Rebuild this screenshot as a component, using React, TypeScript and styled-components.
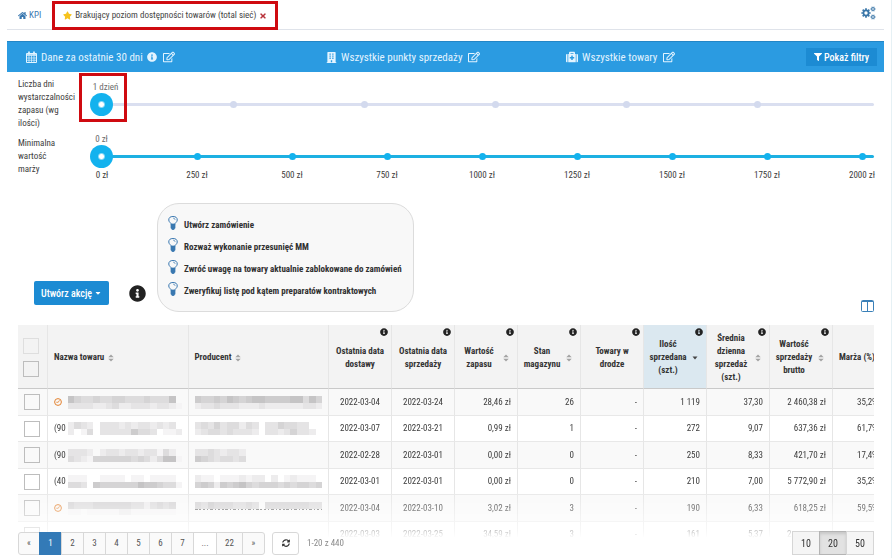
import React, { useState } from "react";
import styled, { createGlobalStyle, css } from "styled-components";
import {
  FaBuilding,
  FaFilter,
  FaHome,
  FaInfoCircle,
  FaMedkit,
  FaRegEdit,
  FaStar,
  FaSyncAlt,
  FaTimes,
  FaCaretDown,
} from "react-icons/fa";

const GlobalStyle = createGlobalStyle`
  *, *::before, *::after { box-sizing: border-box; }
  body {
    margin: 0;
    background: #fff;
    color: #3c3c3c;
    font-family: "Roboto Condensed", Roboto, "Liberation Sans", sans-serif;
    font-size: 9px;
    line-height: 13px;
  }
  button, input { font: inherit; color: inherit; }
  svg { display: block; flex: none; }
`;

const Page = styled.div`
  min-height: 100vh;
  padding: 0 7px;
  border-right: 1px solid #e6f1f5;
  overflow: hidden;
`;

const Tabs = styled.nav`
  display: flex;
  align-items: stretch;
  height: 30px;
  border-bottom: 1px solid #dfe3ea;
`;

const Tab = styled.a<{ $active?: boolean }>`
  position: relative;
  display: flex;
  align-items: center;
  gap: ${(p) => (p.$active ? "3px" : "2px")};
  padding: 2px 11px 0 11px;
  color: ${(p) => (p.$active ? "#444" : "#3a78b0")};
  text-decoration: none;
  white-space: nowrap;
`;

const CloseButton = styled.button`
  display: flex;
  padding: 0;
  border: 0;
  background: none;
  color: #b8323a;
  cursor: pointer;
`;

const SettingsButton = styled.button`
  display: flex;
  align-items: center;
  margin-left: auto;
  padding: 0 8px 4px;
  border: 0;
  background: none;
  color: #3a76a8;
  cursor: pointer;
`;

const Highlight = styled.span<{ $around: "tab" | "thumb" }>`
  position: absolute;
  border: 3px solid #cf0a10;
  pointer-events: none;
  ${(p) =>
    p.$around === "tab"
      ? css`
          inset: 1px 0 -1px 0;
        `
      : css`
          left: -11px;
          top: -5px;
          width: 48px;
          height: 49px;
        `}
`;

const FilterBar = styled.div`
  display: grid;
  grid-template-columns: 5fr 4fr 4fr auto;
  align-items: center;
  height: 31px;
  margin-top: 11px;
  padding: 0 7px 0 19px;
  background: #2b9be1;
  border-top: 1px solid #2386c6;
  color: #e3f4ff;
  font-size: 11px;
`;

const FilterItem = styled.div`
  display: flex;
  align-items: center;
  gap: 4px;
  white-space: nowrap;
`;

const FilterEdit = styled.button`
  display: flex;
  padding: 0 0 0 2px;
  border: 0;
  background: none;
  cursor: pointer;
`;

const ShowFilters = styled.button`
  display: flex;
  align-items: center;
  gap: 2px;
  height: 18px;
  padding: 0 8px;
  border: 0;
  background: #1c8bd3;
  color: #fff;
  font-size: 10px;
  font-weight: 500;
  cursor: pointer;
`;

const Content = styled.main`
  padding: 0 10px 0 11px;
`;

const Sliders = styled.section`
  display: grid;
  row-gap: 2px;
  padding-top: 6px;
`;

const SliderRow = styled.div<{ $lower?: boolean }>`
  display: grid;
  grid-template-columns: 72px 1fr;
  & > label {
    padding-top: ${(p) => (p.$lower ? "5px" : "0")};
    padding-right: 12px;
  }
`;

const SliderBody = styled.div<{ $lower?: boolean }>`
  position: relative;
  padding-top: ${(p) => (p.$lower ? "0" : "2px")};
`;

const SliderValue = styled.output<{ $wide?: boolean }>`
  display: flex;
  justify-content: center;
  width: ${(p) => (p.$wide ? "31px" : "23px")};
  height: 13px;
  padding-top: 1px;
  color: #6b6b6b;
  white-space: nowrap;
`;

const Track = styled.div<{ $color: string }>`
  position: relative;
  height: 23px;
  &::before {
    content: "";
    position: absolute;
    inset: 10px 0 10px 12px;
    border-radius: 2px;
    background: ${(p) => p.$color};
  }
`;

const Marks = styled.div<{ $overlay?: boolean; $end: string }>`
  display: flex;
  justify-content: space-between;
  align-items: center;
  margin: 0 ${(p) => p.$end} 0 12px;
  height: 15px;
  ${(p) =>
    p.$overlay &&
    css`
      position: absolute;
      inset: 0;
      height: auto;
    `}
`;

const Mark = styled.span`
  display: flex;
  justify-content: center;
  width: 0;
  white-space: nowrap;
`;

const Dot = styled.i<{ $color: string }>`
  flex: none;
  width: 7px;
  height: 7px;
  border-radius: 50%;
  background: ${(p) => p.$color};
`;

const Range = styled.input`
  appearance: none;
  position: relative;
  display: block;
  width: 100%;
  height: 23px;
  margin: 0;
  background: transparent;
  cursor: pointer;
  &::-webkit-slider-thumb {
    appearance: none;
    width: 23px;
    height: 23px;
    border-radius: 50%;
    background: radial-gradient(circle, #fff 0 2px, #13b2ee 4px);
  }
`;

const Actions = styled.section`
  display: flex;
  align-items: flex-end;
  margin-top: 20px;
  padding-left: 16px;
`;

const CreateAction = styled.button`
  display: flex;
  align-items: center;
  justify-content: center;
  gap: 2px;
  width: 75px;
  height: 24px;
  margin-bottom: 7px;
  padding: 0;
  border: 0;
  border-radius: 2px;
  background: #1c8bd3;
  color: #fff;
  font-size: 10px;
  font-weight: 500;
  white-space: nowrap;
  cursor: pointer;
`;

const HelpIcon = styled.span`
  margin: 0 11px 10px 20px;
  color: #222;
`;

const Hints = styled.ul`
  margin: 0;
  padding: 10px 11px 9px 10px;
  border: 1px solid #dcdcdc;
  border-radius: 22px;
  background: #f8f8f8;
  list-style: none;
`;

const Hint = styled.li`
  display: flex;
  align-items: center;
  gap: 6px;
  height: 22px;
  color: #303030;
  font-weight: 700;
  & svg {
    margin-bottom: 4px;
  }
`;

const ColumnsButton = styled.button`
  display: flex;
  margin-left: auto;
  padding: 0;
  border: 0;
  background: none;
  color: #3a80b8;
  cursor: pointer;
`;

const TableArea = styled.div`
  max-height: 213px;
  margin-top: 13px;
  overflow: hidden;
  mask-image: linear-gradient(#000 0 163px, rgba(0, 0, 0, 0.3) 206px, transparent);
`;

const Table = styled.table`
  width: calc(100% + 12px);
  table-layout: fixed;
  border-collapse: separate;
  border-spacing: 0;
`;

const Col = styled.col<{ $w?: number }>`
  width: ${(p) => (p.$w ? `${p.$w}px` : "auto")};
`;

const HeadCell = styled.th<{ $sorted?: boolean }>`
  position: relative;
  height: 64px;
  padding: 0;
  background: ${(p) => (p.$sorted ? "#dbe8f0" : "#f3f3f3")};
  border-bottom: 1px solid #c9c9c9;
  border-right: 1px solid #e6e6e6;
  color: #333;
  font-weight: 700;
  vertical-align: middle;
`;

const HeadInner = styled.div<{ $left?: boolean; $sortable?: boolean }>`
  display: flex;
  align-items: center;
  justify-content: ${(p) => (p.$left ? "flex-start" : "center")};
  gap: 4px;
  padding-top: 2px;
  padding-right: ${(p) => (p.$sortable && !p.$left ? "8px" : "0")};
  padding-left: ${(p) => (p.$left ? "6px" : "0")};
  white-space: nowrap;
  & > span {
    flex: ${(p) => (p.$left ? "none" : "1")};
  }
  & > svg {
    margin-left: ${(p) => (p.$left ? "0" : "-4px")};
  }
`;

const Line = styled.span`
  display: block;
`;

const HeadInfo = styled.span`
  position: absolute;
  top: 3px;
  right: 3px;
  color: #222;
`;

const BodyRow = styled.tr`
  height: 26px;
  background: #fff;
  &:nth-child(odd) {
    height: 27px;
    background: #f9f9f9;
  }
`;

const Cell = styled.td<{ $align?: "left" | "center" | "right"; $indent?: number }>`
  padding: 0 6px 0 ${(p) => p.$indent ?? 6}px;
  border-right: 1px solid #e6e6e6;
  border-bottom: 1px solid #e8e8e8;
  text-align: ${(p) => p.$align ?? "left"};
  white-space: nowrap;
`;

const NameCell = styled.div`
  display: flex;
  align-items: center;
  gap: 1px;
`;

const NameStart = styled.span`
  flex: none;
  width: 13px;
`;

const Check = styled.input<{ $faint?: boolean }>`
  appearance: none;
  display: block;
  width: 16px;
  height: 16px;
  margin: 0 auto;
  border: 1px solid ${(p) => (p.$faint ? "#dedede" : "#bdbdbd")};
  background: transparent;
  & + & {
    margin-top: 7px;
  }
  &:checked {
    background: #2b9be1;
  }
`;

const CheckPair = styled.div`
  padding: 2px 4px 0 0;
`;

const Footer = styled.footer`
  position: relative;
  display: flex;
  align-items: center;
  margin-top: -7px;
`;

const ButtonGroup = styled.div`
  display: flex;
  background: #fff;
  & > button {
    margin-left: -1px;
  }
  & > button:first-child {
    margin-left: 0;
    border-radius: 3px 0 0 3px;
  }
  & > button:last-child {
    border-radius: 0 3px 3px 0;
  }
`;

const PageButton = styled.button<{ $w?: number; $current?: boolean; $flat?: boolean }>`
  width: ${(p) => p.$w ?? 23}px;
  height: 23px;
  padding: 0;
  border: 1px solid ${(p) => (p.$current ? "#337ab7" : "#d8d8d8")};
  background: ${(p) => (p.$current ? "#337ab7" : p.$flat ? "#fff" : "#fafafa")};
  color: ${(p) => (p.$current ? "#fff" : "#555")};
  cursor: pointer;
`;

const RefreshButton = styled.button`
  display: flex;
  align-items: center;
  justify-content: center;
  width: 27px;
  height: 23px;
  margin: 0 8px 0 7px;
  border: 1px solid #d8d8d8;
  border-radius: 3px;
  background: #fff;
  color: #333;
  cursor: pointer;
`;

const RangeText = styled.span`
  color: #8a8a8a;
`;

const SizeGroup = styled.div`
  display: flex;
  margin-left: auto;
`;

const SizeButton = styled.button<{ $on?: boolean }>`
  width: 28px;
  height: 24px;
  margin-left: -1px;
  padding: 0;
  border: 1px solid ${(p) => (p.$on ? "#b4b4b4" : "#d6d6d6")};
  background: ${(p) => (p.$on ? "#e2e2e2" : "#f5f5f5")};
  box-shadow: ${(p) => (p.$on ? "inset 0 2px 3px rgba(0,0,0,.12)" : "none")};
  color: #333;
  font-size: 10px;
  cursor: pointer;
`;

const CalendarIcon = () => (
  <svg width="11" height="12" viewBox="0 0 22 24" fill="none" stroke="currentColor" aria-hidden>
    <path d="M1 5h20v18H1z" strokeWidth="2" />
    <path d="M1 8h20" strokeWidth="3" />
    <path d="M1 14h20M1 18.5h20M6 9v14M11 9v14M16 9v14" strokeWidth="1.4" />
    <path d="M6 1v6M16 1v6" strokeWidth="3.4" />
  </svg>
);

const gear = (cx: number, cy: number, r: number, teeth: number) =>
  Array.from({ length: teeth }, (_, i) => {
    const a = (i * 2 * Math.PI) / teeth;
    return `M${cx + Math.cos(a) * r} ${cy + Math.sin(a) * r}L${cx + Math.cos(a) * r * 1.5} ${cy + Math.sin(a) * r * 1.5}`;
  }).join("");

const GearsIcon = () => (
  <svg width="15" height="14" viewBox="0 0 30 28" fill="none" stroke="currentColor" aria-hidden>
    <circle cx="10" cy="14" r="5.2" strokeWidth="3.6" />
    <path d={gear(10, 14, 6.2, 8)} strokeWidth="3.4" />
    <circle cx="24" cy="6" r="2.8" strokeWidth="2" />
    <path d={gear(24, 6, 3.4, 6)} strokeWidth="2.2" />
    <circle cx="24" cy="22" r="2.8" strokeWidth="2" />
    <path d={gear(24, 22, 3.4, 6)} strokeWidth="2.2" />
  </svg>
);

const BulbIcon = () => (
  <svg width="10" height="14" viewBox="0 0 20 28" fill="none" stroke="#3a78b0" aria-hidden>
    <path d="M6.5 17c0-3.5-5-4.5-5-9a8.5 7 0 0 1 17 0c0 4.500-5 5.500-5 9z" strokeWidth="2" />
    <path d="M10.500 4.500c2 0 3.500 1 3.500 3" strokeWidth="1.600" />
    <path d="M6 16h8v8l-2 3H8l-2-3z" fill="#3a78b0" strokeWidth="1.500" />
  </svg>
);

const ColumnsIcon = () => (
  <svg width="13" height="12" viewBox="0 0 13 12" fill="none" stroke="currentColor" aria-hidden>
    <rect x="0.5" y="0.5" width="12" height="11" rx="1" />
    <path d="M1 1.5h11M6.5 1v10" />
  </svg>
);

const ClockIcon = () => (
  <svg width="8" height="8" viewBox="0 0 16 16" fill="none" stroke="#e2812f" strokeWidth="2" aria-hidden>
    <circle cx="8" cy="8" r="6.8" />
    <path d="M4.5 8.5h4l2.5-4" strokeWidth="1.6" />
  </svg>
);

const SortIcon = ({ down }: { down?: boolean }) =>
  down ? (
    <svg width="6" height="8" viewBox="0 0 6 8" aria-hidden>
      <path d="M0.5 2.5h5L3 5.5z" fill="#444" />
    </svg>
  ) : (
    <svg width="6" height="8" viewBox="0 0 6 8" fill="#a3a3a3" aria-hidden>
      <path d="M0.3 3.2h5.4L3 0.4zM0.3 4.8h5.4L3 7.6z" />
    </svg>
  );

/* Pixelated block strip: each digit is the darkness of one square. */
const Mosaic = ({ rows, cols, dashed }: { rows: string[]; cols: number; dashed?: boolean }) => (
  <svg
    width={Math.round((cols * 19) / 3)}
    height="13"
    viewBox={`0 0 ${cols} 2`}
    preserveAspectRatio="none"
    shapeRendering="crispEdges"
    aria-hidden
  >
    {rows.flatMap((row, y) =>
      row.split("").map((d, x) => {
        const tone = 253 - Number(d) * 8;
        return d === "." ? null : (
          <rect key={`${x}-${y}`} x={x} y={y} width="1" height="1" fill={`rgb(${tone},${tone - 1},${tone})`} />
        );
      }),
    )}
    {dashed && <path d="M0 1.1H20" stroke="#777" strokeWidth="0.16" strokeDasharray="0.4 0.3 0.2 0.3" />}
  </svg>
);

type HeadDef = { lines: string[]; info?: boolean; sort?: boolean; sorted?: boolean; left?: boolean };

const headers: HeadDef[] = [
  { lines: ["Nazwa towaru"], sort: true, left: true },
  { lines: ["Producent"], sort: true, left: true },
  { lines: ["Ostatnia data", "dostawy"], info: true },
  { lines: ["Ostatnia data", "sprzedaży"], info: true },
  { lines: ["Wartość", "zapasu"], info: true, sort: true },
  { lines: ["Stan", "magazynu"], info: true, sort: true },
  { lines: ["Towary w", "drodze"], info: true },
  { lines: ["Ilość", "sprzedana", "(szt.)"], info: true, sort: true, sorted: true },
  { lines: ["Średnia", "dzienna", "sprzedaż", "(szt.)"], info: true, sort: true },
  { lines: ["Wartość", "sprzedaży", "brutto"], info: true, sort: true },
  { lines: ["Marża (%)"], left: true },
];

type RowDef = { code?: string; name: string[]; maker: string[]; dashed?: boolean; cells: string[]; margin?: string };

const rows: RowDef[] = [
  {
    name: ["75445445544454447", "333322342233323321"],
    maker: ["65565765677666677475", "233433322232222223321"],
    cells: ["2022-03-04", "2022-03-24", "28,46 zł", "26", "-", "1 119", "37,30", "2 460,38 zł"],
    margin: "35,2%",
  },
  {
    code: "(90",
    name: ["2432.333232332323", "2.14.333336443.1121"],
    maker: ["3435344243.3354433.", "2344343332.33235332.1"],
    cells: ["2022-03-07", "2022-03-21", "0,99 zł", "1", "-", "272", "9,07", "637,36 zł"],
    margin: "61,7%",
  },
  {
    code: "(90",
    name: ["3332.233233233142", "432155555545424771"],
    maker: ["33432332", "65434434"],
    cells: ["2022-02-28", "2022-03-01", "0,00 zł", "0", "-", "250", "8,33", "421,70 zł"],
    margin: "17,4%",
  },
  {
    code: "(40",
    name: ["111..1111.11.1111", "443.65555557665441"],
    maker: ["211.1112122.2.12111", "56526567545554545545"],
    cells: ["2022-03-01", "2022-03-01", "0,00 zł", "0", "-", "210", "7,00", "5 772,90 zł"],
    margin: "35,2%",
  },
  {
    name: ["54445555554424545", "11.11111221111111"],
    maker: ["5465554454.5555555445", ""],
    dashed: true,
    cells: ["2022-03-04", "2022-03-10", "3,02 zł", "3", "-", "190", "6,33", "618,25 zł"],
    margin: "59,5%",
  },
  {
    name: ["", ""],
    maker: ["", ""],
    cells: ["2022-03-03", "2022-03-25", "34,59 zł", "3", "-", "161", "5,37", "2"],
  },
];

const hints = [
  "Utwórz zamówienie",
  "Rozważ wykonanie przesunięć MM",
  "Zwróć uwagę na towary aktualnie zablokowane do zamówień",
  "Zweryfikuj listę pod kątem preparatów kontraktowych",
];

const amounts = [0, 250, 500, 750, 1000, 1250, 1500, 1750, 2000];
const days = [1, 2, 3, 4, 5, 6];

export default function App() {
  const [day, setDay] = useState(0);
  const [amount, setAmount] = useState(0);
  const [page, setPage] = useState("1");
  const [size, setSize] = useState(20);

  return (
    <>
      <GlobalStyle />
      <Page>
        <Tabs>
          <Tab href="#kpi">
            <FaHome size={9} />
            KPI
          </Tab>
          <Tab as="div" $active>
            <FaStar size={9} color="#f6c21c" />
            Brakujący poziom dostępności towarów (total sieć)
            <CloseButton aria-label="Zamknij">
              <FaTimes size={8} />
            </CloseButton>
            <Highlight $around="tab" />
          </Tab>
          <SettingsButton aria-label="Ustawienia">
            <GearsIcon />
          </SettingsButton>
        </Tabs>

        <FilterBar>
          <FilterItem>
            <CalendarIcon />
            Dane za ostatnie 30 dni
            <FaInfoCircle size={10} />
            <FilterEdit aria-label="Zmień okres">
              <FaRegEdit size={12} />
            </FilterEdit>
          </FilterItem>
          <FilterItem>
            <FaBuilding size={11} />
            Wszystkie punkty sprzedaży
            <FilterEdit aria-label="Zmień punkty">
              <FaRegEdit size={12} />
            </FilterEdit>
          </FilterItem>
          <FilterItem>
            <FaMedkit size={12} />
            Wszystkie towary
            <FilterEdit aria-label="Zmień towary">
              <FaRegEdit size={12} />
            </FilterEdit>
          </FilterItem>
          <ShowFilters>
            <FaFilter size={8} />
            Pokaż filtry
          </ShowFilters>
        </FilterBar>

        <Content>
          <Sliders>
            <SliderRow>
              <label htmlFor="days">Liczba dni wystarczalności zapasu (wg ilości)</label>
              <SliderBody>
                <SliderValue htmlFor="days" $wide>
                  1 dzień
                </SliderValue>
                <Track $color="#dadff0">
                  <Marks $overlay $end="117px">
                    {days.map((d) => (
                      <Mark key={d}>
                        <Dot $color="#d3daee" />
                      </Mark>
                    ))}
                  </Marks>
                  <Range
                    id="days"
                    type="range"
                    min={0}
                    max={100}
                    value={day}
                    onChange={(e) => setDay(Number(e.target.value))}
                  />
                </Track>
                <Highlight $around="thumb" />
              </SliderBody>
            </SliderRow>
            <SliderRow $lower>
              <label htmlFor="margin">
                Minimalna
                <br />
                wartość
                <br />
                marży
              </label>
              <SliderBody $lower>
                <SliderValue htmlFor="margin">0 zł</SliderValue>
                <Track $color="#1db0e2">
                  <Marks $overlay $end="12px">
                    {amounts.map((a) => (
                      <Mark key={a}>
                        <Dot $color="#13b2ee" />
                      </Mark>
                    ))}
                  </Marks>
                  <Range
                    id="margin"
                    type="range"
                    min={0}
                    max={2000}
                    value={amount}
                    onChange={(e) => setAmount(Number(e.target.value))}
                  />
                </Track>
                <Marks $end="12px">
                  {amounts.map((a) => (
                    <Mark key={a}>{a} zł</Mark>
                  ))}
                </Marks>
              </SliderBody>
            </SliderRow>
          </Sliders>

          <Actions>
            <CreateAction>
              Utwórz akcję
              <FaCaretDown size={8} />
            </CreateAction>
            <HelpIcon>
              <FaInfoCircle size={17} />
            </HelpIcon>
            <Hints>
              {hints.map((h) => (
                <Hint key={h}>
                  <BulbIcon />
                  {h}
                </Hint>
              ))}
            </Hints>
            <ColumnsButton aria-label="Kolumny">
              <ColumnsIcon />
            </ColumnsButton>
          </Actions>

          <TableArea>
            <Table>
              <colgroup>
                <Col $w={30} />
                <Col />
                <Col />
                {headers.slice(2, 10).map((h, i) => (
                  <Col key={i} $w={63} />
                ))}
                <Col $w={53} />
              </colgroup>
              <thead>
                <tr>
                  <HeadCell>
                    <CheckPair>
                      <Check type="checkbox" aria-label="Zaznacz wszystko" $faint />
                      <Check type="checkbox" aria-label="Zaznacz stronę" />
                    </CheckPair>
                  </HeadCell>
                  {headers.map((h, i) => (
                    <HeadCell key={i} $sorted={h.sorted}>
                      <HeadInner $left={h.left} $sortable={h.sort}>
                        <span>
                          {h.lines.map((l) => (
                            <Line key={l}>{l}</Line>
                          ))}
                        </span>
                        {h.sort && <SortIcon down={h.sorted} />}
                      </HeadInner>
                      {h.info && (
                        <HeadInfo>
                          <FaInfoCircle size={8} />
                        </HeadInfo>
                      )}
                    </HeadCell>
                  ))}
                </tr>
              </thead>
              <tbody>
                {rows.map((r, i) => (
                  <BodyRow key={i}>
                    <Cell $indent={5}>
                      <Check type="checkbox" aria-label={`Zaznacz wiersz ${i + 1}`} />
                    </Cell>
                    <Cell>
                      <NameCell>
                        <NameStart>{r.code ?? (r.name[0] && <ClockIcon />)}</NameStart>
                        <Mosaic rows={r.name} cols={18} />
                      </NameCell>
                    </Cell>
                    <Cell>
                      <Mosaic rows={r.maker} cols={20} dashed={r.dashed} />
                    </Cell>
                    {r.cells.map((c, j) => (
                      <Cell
                        key={j}
                        $align={j < 2 ? "center" : c === "2" ? "left" : "right"}
                        $indent={c === "2" ? 17 : 6}
                      >
                        {c}
                      </Cell>
                    ))}
                    <Cell $indent={24}>{r.margin}</Cell>
                  </BodyRow>
                ))}
              </tbody>
            </Table>
          </TableArea>

          <Footer>
            <ButtonGroup>
              <PageButton $w={22}>«</PageButton>
              {["1", "2", "3", "4", "5", "6", "7"].map((n) => (
                <PageButton key={n} $current={page === n} onClick={() => setPage(n)}>
                  {n}
                </PageButton>
              ))}
              <PageButton $w={24} $flat>
                ...
              </PageButton>
              <PageButton $w={27}>22</PageButton>
              <PageButton>»</PageButton>
            </ButtonGroup>
            <RefreshButton aria-label="Odśwież">
              <FaSyncAlt size={8} />
            </RefreshButton>
            <RangeText>1-20 z 440</RangeText>
            <SizeGroup>
              {[10, 20, 50].map((n) => (
                <SizeButton key={n} $on={size === n} onClick={() => setSize(n)}>
                  {n}
                </SizeButton>
              ))}
            </SizeGroup>
          </Footer>
        </Content>
      </Page>
    </>
  );
}
